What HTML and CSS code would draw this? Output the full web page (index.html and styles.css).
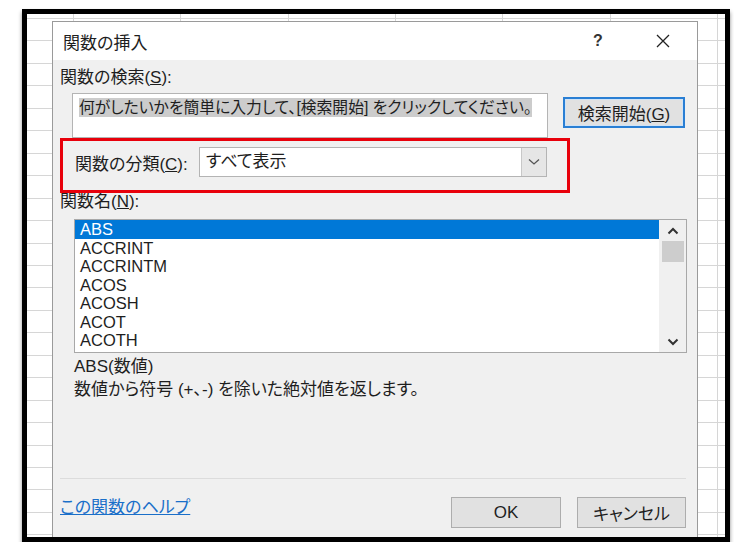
FILE: index.html
```html
<!DOCTYPE html>
<html>
<head>
	<meta charset="utf-8">
	<title>関数の挿入</title>
	<link rel="stylesheet" href="styles.css">
</head>
<body>
	<div class="frame">
		<div class="dialog">
			<div class="titleBar">
				<span class="title">関数の挿入</span>
				<span class="helpBtn">?</span>
				<span class="closeBtn">
					<svg width="16" height="16" viewBox="0 0 16 16"><path d="M2 2 L14 14 M14 2 L2 14" stroke="#222" stroke-width="1.3" fill="none"/></svg>
				</span>
			</div>
			<div class="body">
				<div class="label">関数の検索(<u>S</u>):</div>
				<div class="searchRow">
					<div class="searchBox"><span class="selText">何がしたいかを簡単に入力して、[検索開始] をクリックしてください。</span></div>
					<button class="btn btnGo">検索開始(<u>G</u>)</button>
				</div>
				<div class="catRow">
					<span class="catLabel">関数の分類(<u>C</u>):</span>
					<div class="select">
						<span class="selectText">すべて表示</span>
						<span class="selectArrow">
							<svg width="12" height="8" viewBox="0 0 12 8"><path d="M1 1.5 L6 6 L11 1.5" stroke="#555" stroke-width="1.3" fill="none"/></svg>
						</span>
					</div>
				</div>
				<div class="label nameLabel">関数名(<u>N</u>):</div>
				<div class="listBox">
					<ul class="items">
						<li class="selected">ABS</li>
						<li>ACCRINT</li>
						<li>ACCRINTM</li>
						<li>ACOS</li>
						<li>ACOSH</li>
						<li>ACOT</li>
						<li>ACOTH</li>
					</ul>
					<div class="scrollBar">
						<span class="arrow">
							<svg width="12" height="8" viewBox="0 0 12 8"><path d="M1.5 6.5 L6 2 L10.5 6.5" stroke="#333" stroke-width="2" fill="none"/></svg>
						</span>
						<span class="thumb"></span>
						<span class="track"></span>
						<span class="arrow">
							<svg width="12" height="8" viewBox="0 0 12 8"><path d="M1.5 1.5 L6 6 L10.5 1.5" stroke="#333" stroke-width="2" fill="none"/></svg>
						</span>
					</div>
				</div>
				<div class="syntax">ABS(数値)</div>
				<div class="desc">数値から符号 (+、-) を除いた絶対値を返します。</div>
				<div class="separator"></div>
				<div class="footer">
					<a class="helpLink" href="#">この関数のヘルプ</a>
					<div class="buttons">
						<button class="btn btnOk">OK</button>
						<button class="btn btnCancel">キャンセル</button>
					</div>
				</div>
			</div>
			<div class="mark"></div>
		</div>
	</div>
</body>
</html>
```

FILE: styles.css
```css
html, body {
	margin: 0;
	background: #fff;
	font-family: "Liberation Sans", "Noto Sans CJK JP", sans-serif;
	font-feature-settings: "palt";
	color: #1e1e1e;
}

.frame {
	box-sizing: border-box;
	width: 708px;
	height: 533px;
	margin: 9px 0 0 22px;
	border: 5px solid #000;
	box-shadow: 0 3px 4px rgba(0, 0, 0, 0.45);
	overflow: hidden;
	background-color: #fff;
	background-image:
		repeating-linear-gradient(to bottom, #d6d6d6 0 1px, transparent 1px 22.45px),
		repeating-linear-gradient(to right, #d6d6d6 0 1px, transparent 1px 107.3px);
	background-position: 0 4px, 46px 0;
}

.dialog {
	position: relative;
	box-sizing: border-box;
	width: 646px;
	height: 516px;
	margin: 7px 0 0 25px;
	border: 1px solid #9a9a9a;
	border-bottom: none;
	background: #f0f0f0;
	overflow: hidden;
}

.titleBar {
	display: flex;
	align-items: center;
	height: 38px;
	background: #fff;
}
.title {
	flex: 1;
	padding-left: 10px;
	font-size: 17px;
}
.helpBtn {
	width: 40px;
	text-align: center;
	font-size: 16px;
	font-weight: bold;
	color: #333;
}
.closeBtn {
	display: flex;
	justify-content: center;
	width: 46px;
	margin: 0 11px 0 22px;
}

.body {
	padding: 0 11px 0 7px;
	font-size: 17px;
}

.label {
	margin-top: 8px;
	line-height: 20px;
}

.searchRow {
	display: flex;
	align-items: flex-start;
	margin-top: 5px;
}
.searchBox {
	box-sizing: border-box;
	width: 476px;
	height: 45px;
	margin-left: 12px;
	padding: 4px 6px;
	border: 1px solid #b4b4b4;
	background: #fff;
	font-size: 15.8px;
	line-height: 20px;
	white-space: nowrap;
	overflow: hidden;
}
.selText {
	background: #cccccc;
	padding: 1px 0;
}

.btn {
	box-sizing: border-box;
	height: 31px;
	border: 1px solid #adadad;
	background: #e1e1e1;
	font-family: inherit;
	font-feature-settings: "palt";
	font-size: 17px;
	color: #1e1e1e;
	padding: 0;
}
.btnGo {
	width: 122px;
	margin: 4px 0 0 15px;
	border: 2px solid #2a7fd4;
	box-shadow: inset 0 0 0 1px #cfe3f7;
}

.catRow {
	display: flex;
	align-items: center;
	margin-top: 9px;
	height: 30px;
}
.catLabel {
	width: 124px;
	margin-left: 15px;
	flex: none;
}
.select {
	box-sizing: border-box;
	display: flex;
	width: 348px;
	height: 30px;
	border: 1px solid #b4b4b4;
	background: #fff;
}
.selectText {
	flex: 1;
	padding-left: 6px;
	line-height: 28px;
}
.selectArrow {
	display: flex;
	align-items: center;
	justify-content: center;
	width: 24px;
	background: #e6e6e6;
	border-left: 1px solid #c8c8c8;
}

.nameLabel {
	margin-top: 15px;
}

.listBox {
	box-sizing: border-box;
	display: flex;
	width: 613px;
	height: 134px;
	margin: 7px 0 0 14px;
	border: 1px solid #a8a8a8;
	background: #fff;
}
.items {
	flex: 1;
	margin: 0;
	padding: 0;
	list-style: none;
	font-size: 16.5px;
}
.items li {
	padding-left: 5px;
	height: 18.5px;
	line-height: 18.5px;
}
.items li.selected {
	background: #0078d7;
	color: #fff;
}
.scrollBar {
	display: flex;
	flex-direction: column;
	align-items: center;
	width: 27px;
	background: #f0f0f0;
}
.arrow {
	display: flex;
	align-items: center;
	justify-content: center;
	height: 21px;
}
.thumb {
	width: 22px;
	height: 21px;
	background: #cdcdcd;
}
.track {
	flex: 1;
}

.syntax {
	margin: 4px 0 0 14px;
	line-height: 20px;
}
.desc {
	margin: 3px 0 0 14px;
	line-height: 20px;
}

.separator {
	height: 1px;
	margin-top: 78px;
	background: #dcdcdc;
}

.footer {
	display: flex;
	justify-content: space-between;
	align-items: flex-start;
	margin-top: 18px;
}
.helpLink {
	margin-top: 1px;
	line-height: 20px;
	color: #1a6fc9;
	text-decoration: underline;
}
.buttons {
	display: flex;
	gap: 16px;
}
.btnOk {
	width: 110px;
}
.btnCancel {
	width: 109px;
}

/* red annotation frame drawn over the dialog */
.mark {
	position: absolute;
	left: 7px;
	top: 116px;
	box-sizing: border-box;
	width: 510px;
	height: 55px;
	border: 3px solid #e8000b;
}
```
